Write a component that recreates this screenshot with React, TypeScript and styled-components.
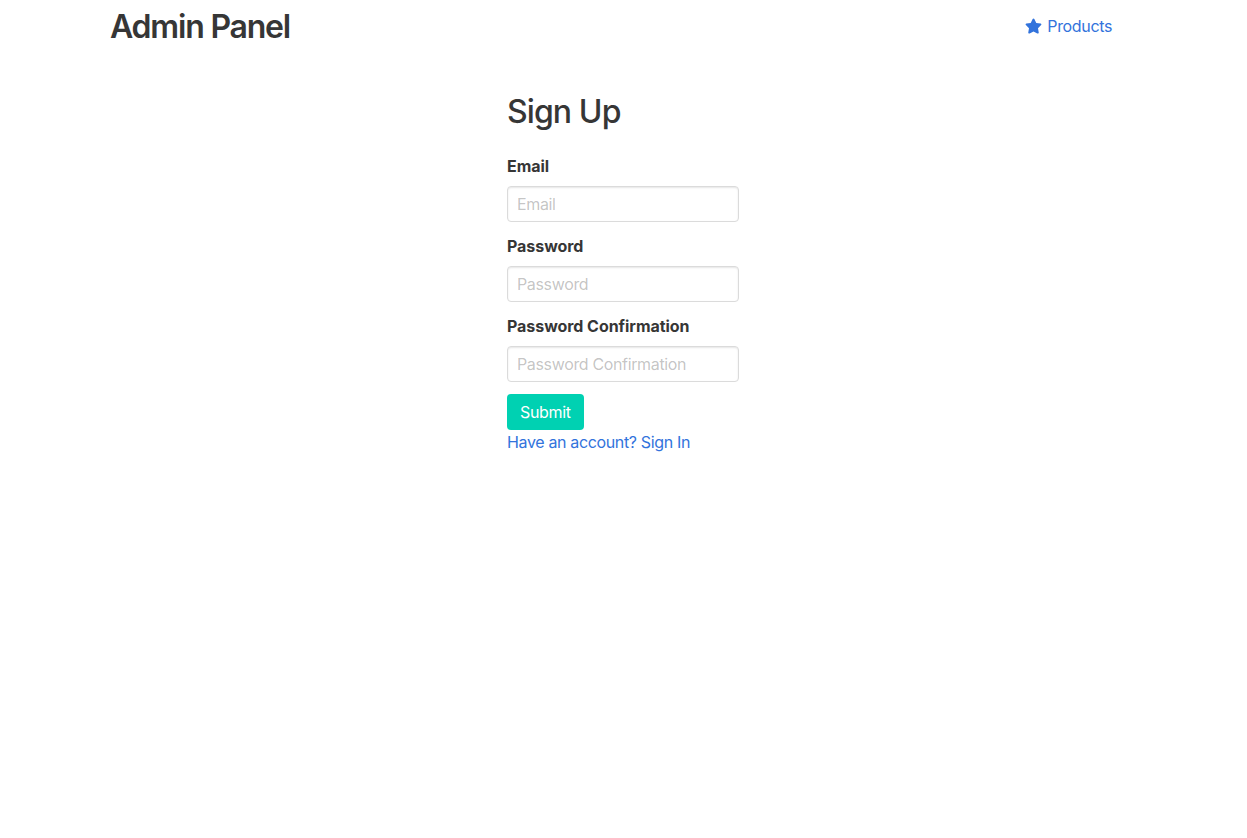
import React from "react";
import styled, { createGlobalStyle } from "styled-components";

const Global = createGlobalStyle`
  html, body { margin: 0; padding: 0; background: #fff; }
  body {
    font-family: Inter, "Noto Sans", "Liberation Sans", sans-serif;
    font-size: 16px;
    line-height: 1.5;
    color: #4a4a4a;
    letter-spacing: -0.35px;
  }
  * { box-sizing: border-box; }
`;

const Navbar = styled.nav`
  height: 52px;
  display: flex;
  align-items: center;
  justify-content: space-between;
  padding: 2px 135px 0 110px;
`;

const Brand = styled.h1`
  margin: 0;
  font-size: 32px;
  font-weight: 600;
  line-height: 1.125;
  color: #363636;
  letter-spacing: -1.2px;
`;

const NavLink = styled.a`
  display: flex;
  align-items: center;
  gap: 5px;
  margin-top: -2px;
  color: #3273dc;
  text-decoration: none;
  font-size: 16px;
`;

const Main = styled.main`
  display: flex;
  justify-content: center;
  padding: 42px 1px 0 0;
`;

const Form = styled.form`
  width: 232px;
  display: flex;
  flex-direction: column;
`;

const Title = styled.h2`
  margin: 0 0 24px;
  font-size: 32px;
  font-weight: 500;
  line-height: 1.125;
  color: #363636;
  letter-spacing: -0.9px;
`;

const Field = styled.div`
  margin-bottom: 12px;
`;

const Label = styled.label`
  display: block;
  font-weight: 700;
  font-size: 16px;
  line-height: 24px;
  color: #363636;
  margin-bottom: 8px;
  letter-spacing: -0.05px;
`;

const Input = styled.input`
  display: block;
  width: 100%;
  height: 36px;
  padding: 0 9px;
  border: 1px solid #dbdbdb;
  border-radius: 4px;
  font-family: inherit;
  font-size: 16px;
  letter-spacing: -0.35px;
  color: #363636;
  box-shadow: inset 0 1px 2px rgba(10, 10, 10, 0.1);
  outline: none;
  &::placeholder { color: rgba(54, 54, 54, 0.3); }
`;

const Button = styled.button`
  align-self: flex-start;
  height: 36px;
  padding: 0 13px;
  border: none;
  border-radius: 4px;
  background: #00d1b2;
  color: #fff;
  font-family: inherit;
  font-size: 16px;
  letter-spacing: -0.35px;
  cursor: pointer;
`;

const Link = styled.a`
  color: #3273dc;
  text-decoration: none;
  font-size: 16px;
  line-height: 24px;
`;

const Star = () => (
  <svg width="17" height="16" viewBox="0 0 576 512" fill="currentColor">
    <path d="M259.3 17.8L194 150.2 47.9 171.5c-26.2 3.8-36.7 36.1-17.7 54.6l105.7 103-25 145.5c-4.5 26.3 23.2 46 46.4 33.7L288 439.6l130.7 68.7c23.2 12.2 50.9-7.4 46.4-33.7l-25-145.5 105.7-103c19-18.5 8.5-50.8-17.7-54.6L382 150.2 316.7 17.8c-11.7-23.6-45.6-23.9-57.4 0z" />
  </svg>
);

export default function App() {
  return (
    <>
      <Global />
      <Navbar>
        <Brand>Admin Panel</Brand>
        <NavLink href="#">
          <Star />
          Products
        </NavLink>
      </Navbar>
      <Main>
        <Form onSubmit={(e) => e.preventDefault()}>
          <Title>Sign Up</Title>
          <Field>
            <Label>Email</Label>
            <Input type="email" placeholder="Email" />
          </Field>
          <Field>
            <Label>Password</Label>
            <Input type="password" placeholder="Password" />
          </Field>
          <Field>
            <Label>Password Confirmation</Label>
            <Input type="password" placeholder="Password Confirmation" />
          </Field>
          <Button type="submit">Submit</Button>
          <Link href="#">Have an account? Sign In</Link>
        </Form>
      </Main>
    </>
  );
}
